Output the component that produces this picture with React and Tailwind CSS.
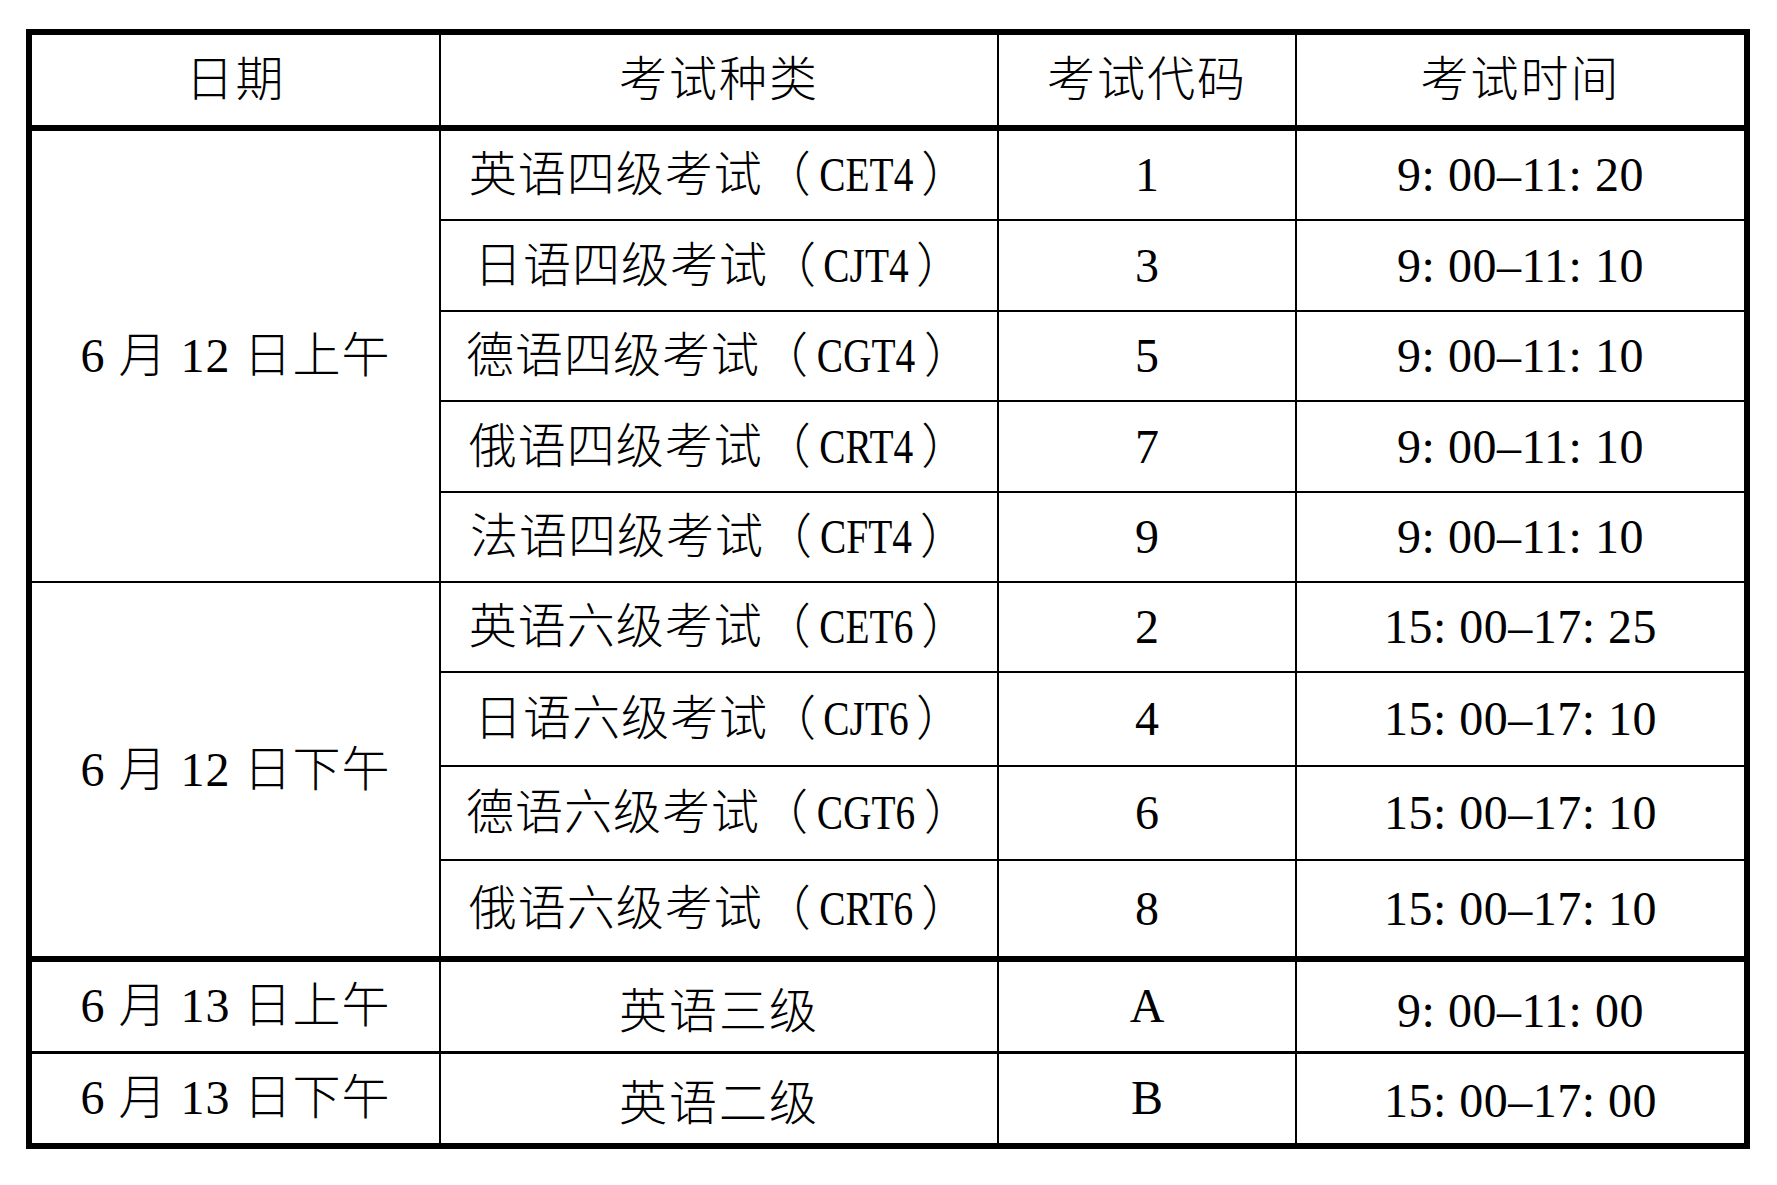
const GROUPS = [
  {
    date: '6 月 12 日上午',
    items: [
      { name: '英语四级考试', abbr: 'CET4', code: '1', time: '9: 00–11: 20', h: 'h-[92px]' },
      { name: '日语四级考试', abbr: 'CJT4', code: '3', time: '9: 00–11: 10', h: 'h-[91px]' },
      { name: '德语四级考试', abbr: 'CGT4', code: '5', time: '9: 00–11: 10', h: 'h-[90px]' },
      { name: '俄语四级考试', abbr: 'CRT4', code: '7', time: '9: 00–11: 10', h: 'h-[91px]' },
      { name: '法语四级考试', abbr: 'CFT4', code: '9', time: '9: 00–11: 10', h: 'h-[90px]' },
    ],
  },
  {
    date: '6 月 12 日下午',
    items: [
      { name: '英语六级考试', abbr: 'CET6', code: '2', time: '15: 00–17: 25', h: 'h-[90px]' },
      { name: '日语六级考试', abbr: 'CJT6', code: '4', time: '15: 00–17: 10', h: 'h-[94px]' },
      { name: '德语六级考试', abbr: 'CGT6', code: '6', time: '15: 00–17: 10', h: 'h-[94px]' },
      { name: '俄语六级考试', abbr: 'CRT6', code: '8', time: '15: 00–17: 10', h: 'h-[99px]' },
    ],
  },
];

const cell = 'border-2 border-black text-center align-middle p-0';

export default function App() {
  return (
    <div className="min-h-screen bg-white pl-[26px] pt-[29px] text-black font-['Liberation_Serif','Noto_Sans_CJK_SC',serif] font-light text-[48px] leading-none">
      <table className="border-collapse border-[6px] border-black table-fixed w-[1724px]">
        <colgroup>
          <col className="w-[411px]" />
          <col className="w-[558px]" />
          <col className="w-[298px]" />
          <col className="w-[451px]" />
        </colgroup>
        <thead>
          <tr className="h-[96px]">
            <th className={`${cell} border-b-[6px] font-light tracking-[2px]`}>日期</th>
            <th className={`${cell} border-b-[6px] font-light tracking-[2px]`}>考试种类</th>
            <th className={`${cell} border-b-[6px] font-light tracking-[2px]`}>考试代码</th>
            <th className={`${cell} border-b-[6px] font-light tracking-[2px]`}>考试时间</th>
          </tr>
        </thead>
        <tbody>
          {GROUPS.map((group, gi) =>
            group.items.map((item, i) => {
              const lastOfAll = gi === GROUPS.length - 1 && i === group.items.length - 1;
              const rowBorder = lastOfAll ? 'border-b-[6px]' : '';
              return (
                <tr key={item.abbr} className={item.h}>
                  {i === 0 && (
                    <td
                      rowSpan={group.items.length}
                      className={`${cell} tracking-[1px] ${gi === GROUPS.length - 1 ? 'border-b-[6px]' : ''}`}
                    >
                      {group.date}
                    </td>
                  )}
                  <td className={`${cell} ${rowBorder}`}>
                    <span className="tracking-[1px]">{item.name}</span>（
                    <span className="inline-block scale-x-[0.82] -mx-[2px]">{item.abbr}</span>）
                  </td>
                  <td className={`${cell} ${rowBorder}`}>{item.code}</td>
                  <td className={`${cell} ${rowBorder} tracking-[0.5px]`}>{item.time}</td>
                </tr>
              );
            })
          )}
          <tr className="h-[93px]">
            <td className={`${cell} border-b-[3px] tracking-[1px]`}>6 月 13 日上午</td>
            <td className={`${cell} border-b-[3px] pt-[12px] tracking-[2px]`}>英语三级</td>
            <td className={`${cell} border-b-[3px]`}>A</td>
            <td className={`${cell} border-b-[3px] pt-[10px] tracking-[0.5px]`}>9: 00–11: 00</td>
          </tr>
          <tr className="h-[94px]">
            <td className={`${cell} tracking-[1px]`}>6 月 13 日下午</td>
            <td className={`${cell} pt-[12px] tracking-[2px]`}>英语二级</td>
            <td className={cell}>B</td>
            <td className={`${cell} pt-[6px] tracking-[0.5px]`}>15: 00–17: 00</td>
          </tr>
        </tbody>
      </table>
    </div>
  );
}
